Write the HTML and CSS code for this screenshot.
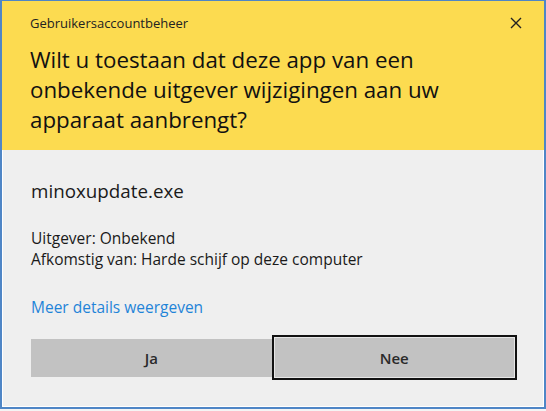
FILE: index.html
```html
<!DOCTYPE html>
<html lang="nl">

<head>
    <meta charset="UTF-8">
    <meta name="viewport" content="width=device-width, initial-scale=1.0">
    <title>Gebruikersaccountbeheer</title>
    <link rel="stylesheet" href="styles.css">
</head>

<body>
    <div class="dialog">
        <!-- gele kop -->
        <div class="head">
            <div class="titlebar">
                <span class="title">Gebruikersaccountbeheer</span>
                <span class="close">
                    <svg width="12" height="12" viewBox="0 0 12 12">
                        <path d="M1 1 L11 11 M11 1 L1 11" stroke="#222" stroke-width="1.4" fill="none" />
                    </svg>
                </span>
            </div>
            <h1 class="question">Wilt u toestaan dat deze app van een onbekende uitgever wijzigingen aan uw apparaat aanbrengt?</h1>
        </div>

        <div class="body">
            <div class="app-name">minoxupdate.exe</div>
            <div class="info">
                <p>Uitgever: Onbekend</p>
                <p>Afkomstig van: Harde schijf op deze computer</p>
            </div>
            <a class="details" href="#">Meer details weergeven</a>
            <div class="buttons">
                <button class="btn">Ja</button>
                <button class="btn btn-focus">Nee</button>
            </div>
        </div>
    </div>
</body>

</html>
```

FILE: styles.css
```css
* {
    margin: 0;
    padding: 0;
    box-sizing: border-box;
}

html,
body {
    width: 546px;
    height: 411px;
    background: #f4f4f4;
    overflow: hidden;
}

body {
    font-family: "Open Sans", "Noto Sans", sans-serif;
    color: #1a1a1a;
}

.dialog {
    width: 546px;
    height: 409px;
    border: 2px solid #4f86c6;
    border-top-width: 1px;
    background: #efefef;
    box-shadow: inset 1px 0 0 #fff, inset -1px 0 0 #fff, inset 0 -1px 0 #fff;
    display: flex;
    flex-direction: column;
}

.head {
    background: #fcdb50;
    height: 149px;
    padding: 9px 22px 0 28px;
}

.titlebar {
    display: flex;
    justify-content: space-between;
    align-items: center;
    height: 26px;
}

.title {
    font-size: 13px;
    color: #222;
}

.close {
    display: flex;
}

.question {
    font-weight: normal;
    font-size: 22.3px;
    line-height: 30px;
    margin-top: 9px;
    color: #111;
    width: 440px;
}

.body {
    flex: 1;
    padding: 27px 27px 0 29px;
}

.app-name {
    font-size: 18.8px;
    line-height: 28px;
}

.info {
    margin-top: 23px;
    font-size: 15.5px;
    line-height: 21px;
}

.details {
    display: inline-block;
    margin-top: 26px;
    font-size: 15.5px;
    line-height: 22px;
    color: #1f84d8;
    text-decoration: none;
}

.buttons {
    display: flex;
    align-items: center;
    margin-top: 17px;
}

.btn {
    font-family: inherit;
    font-size: 15px;
    font-weight: 600;
    color: #2a2a2a;
    background: #c2c2c2;
    border: none;
    height: 38px;
    width: 241px;
}

.btn-focus {
    width: 246px;
    height: 45px;
    border: 2px solid #111;
    box-shadow: inset 0 0 0 1px #e6e6e6;
}
```
